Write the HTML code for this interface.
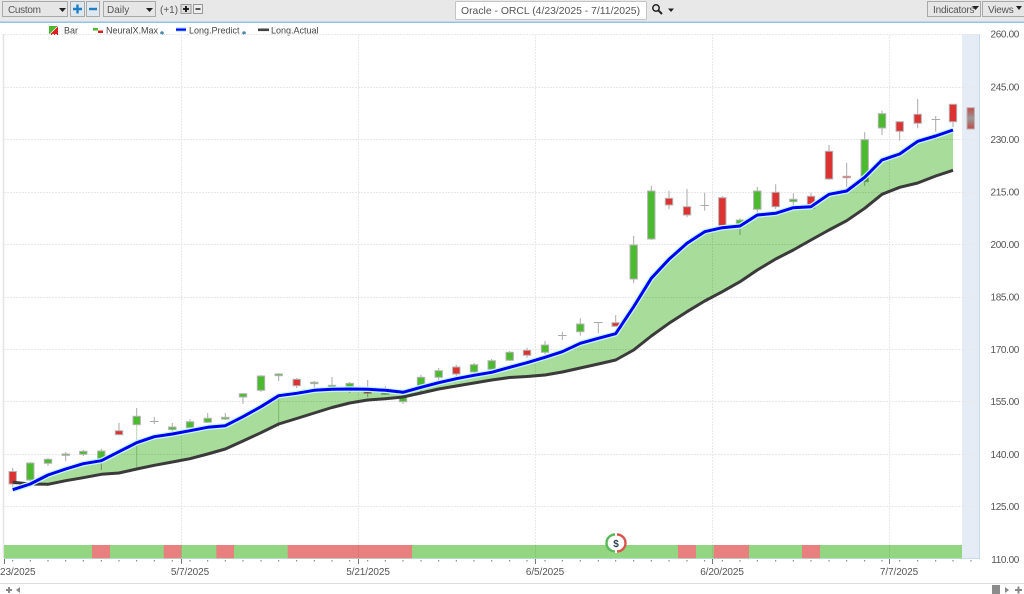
<!DOCTYPE html>
<html><head><meta charset="utf-8"><style>
html,body{margin:0;padding:0;background:#fff}
body{width:1024px;height:594px;overflow:hidden;position:relative;font-family:"Liberation Sans",sans-serif}
svg{position:absolute;left:0;top:0;display:block;filter:blur(.35px)}
text{font-family:"Liberation Sans",sans-serif}
.g{fill:#4cba2f;stroke:#b4b4b4;stroke-width:1}
.r{fill:#dc3232;stroke:#b4b4b4;stroke-width:1}
.ax{font-size:10px;fill:#555;text-anchor:end;letter-spacing:-.35px}
.dt{font-size:10px;fill:#555;text-anchor:middle;letter-spacing:-.1px}
.lg{font-size:9px;fill:#444}
.tb{font-size:10px;fill:#555}
.bx{fill:#e6e6e6;stroke:#a9a9a9;stroke-width:1}
</style></head><body>
<svg width="1024" height="594" viewBox="0 0 1024 594" xmlns="http://www.w3.org/2000/svg">
<rect x="0" y="0" width="1024" height="22" fill="#e8e8e8"/>
<rect x="0" y="21.5" width="1024" height="1.5" fill="#8fc6e8"/>
<rect x="2.5" y="1.5" width="65" height="15" class="bx"/>
<text x="8" y="13" class="tb" letter-spacing="-.3">Custom</text>
<path d="M59 8h7l-3.5 4z" fill="#222"/>
<rect x="70.5" y="1.500" width="14" height="15" fill="#dfe8ef" stroke="#a9a9a9"/>
<path d="M77.5 4.500v9M73 9h9" stroke="#1f7fc4" stroke-width="2.4"/>
<rect x="86.5" y="1.500" width="13" height="15" fill="#dfe8ef" stroke="#a9a9a9"/>
<path d="M89 9h8" stroke="#1f7fc4" stroke-width="2.4"/>
<rect x="103.5" y="1.500" width="52" height="15" class="bx"/>
<text x="107" y="13" class="tb">Daily</text>
<path d="M146 8h7l-3.5 4z" fill="#222"/>
<text x="160" y="13" class="tb">(+1)</text>
<rect x="181" y="4.500" width="10" height="9" fill="#ddd" stroke="#999"/>
<path d="M186 6v6M183 9h6" stroke="#111" stroke-width="1.8"/>
<rect x="193.5" y="4.500" width="9" height="9" fill="#eee" stroke="#999"/>
<path d="M195.5 9h5" stroke="#111" stroke-width="1.4"/>
<rect x="455.5" y="1.500" width="191" height="18" rx="1" fill="#fff" stroke="#c4c4c4"/>
<text x="461" y="14" font-size="10.4" fill="#555">Oracle - ORCL (4/23/2025 - 7/11/2025)</text>
<circle cx="656" cy="8" r="3.2" fill="none" stroke="#222" stroke-width="1.5"/>
<path d="M658.4 10.4l3.6 3.6" stroke="#222" stroke-width="2"/>
<path d="M668 8.500h6l-3 3.500z" fill="#222"/>
<rect x="927.5" y="1.500" width="53" height="15" class="bx"/>
<text x="933" y="13" class="tb" letter-spacing="-.2">Indicators</text>
<path d="M972 6h7l-3.500 4z" fill="#222"/>
<rect x="982.5" y="1.500" width="42" height="15" class="bx"/>
<text x="988" y="13" class="tb" letter-spacing="-.2">Views</text>
<path d="M1016 6h6l-3 4z" fill="#222"/>

<path d="M49 26h9v9h-9z" fill="#4cba2f"/><path d="M58 26v9h-9z" fill="#dc2020"/><path d="M49 35l9-9" stroke="#fff" stroke-width=".6"/>
<text x="64" y="33.500" class="lg">Bar</text>
<path d="M93 28h5v2.500h-5z" fill="#4cba2f"/><path d="M98 30.500h5V33h-5z" fill="#dc2020"/>
<text x="106" y="33.500" class="lg">NeuralX.Max</text>
<circle cx="162" cy="33" r="1.800" fill="#4a8aa8"/>
<rect x="176" y="27" width="10" height="5" fill="#bff0ff"/><rect x="176" y="28.500" width="10" height="2.200" fill="#0000ff"/>
<text x="189" y="33.500" class="lg">Long.Predict</text>
<circle cx="244" cy="33" r="1.800" fill="#4a8aa8"/>
<rect x="258" y="28.500" width="11" height="2.600" fill="#444"/>
<text x="271" y="33.500" class="lg">Long.Actual</text>

<rect x="962" y="34" width="17" height="524" fill="#e6ecf6"/>
<path d="M979.5 34V558.500H4" fill="none" stroke="#c4dcf0"/>
<path d="M3.500 34V558" stroke="#e4e4e4" stroke-width="1.500"/>
<path d="M4 34.500H979M4 87.500H979M4 139.500H979M4 192.500H979M4 244.500H979M4 297.500H979M4 349.500H979M4 401.500H979M4 454.500H979M4 506.500H979" stroke="#e8e8e8" stroke-dasharray="2 1"/>
<path d="M181.500 34V558M358.500 34V558M535.500 34V558M712.500 34V558M889.500 34V558" stroke="#e8e8e8" stroke-dasharray="2 1"/>

<path fill="none" stroke="#aaa" stroke-width="1" d="M12.700 468V488M30.300 462V482M48 458V466M65.700 452V461M83.300 450V456M101.300 449V470M119 423V435M136.700 408V425M154.300 417V424M172.300 423V434M190 419V428M207.700 413V423M225.300 413V420M243 393V404M261 375V392M278.700 373V381M296.700 378V388M314.300 381V389M332 377V392M349.700 382V393M367.700 380V397M385.300 386V395M403 393V404M421 375V393M438.700 368V380M456.300 365V378M474 363V378M491.700 359V373M509.700 351V361M527 347.700V357.700M545 341V354.300M562.300 331.700V340M580.300 318.300V335.700M598.300 322V333.300M615.700 315V326.700M633.700 235.700V283.300M651.300 186V240M669 190.700V209.300M687 189V217.300M704.700 192.700V210.700M722.300 196V228M740 218.300V235M757.300 186.700V213.300M775.700 184.300V209M793.300 193.300V206.700M811 192.700V209.300M829 145V180M846.700 162.700V186.700M864.700 132.300V185.700M882 110.700V135M899.700 121.700V140.700M917.700 99V128.300M935.700 116V131.700M953 104V127.300M150 421.500h8.600M558 335.500h8.600M594 322.500h8.600M700.500 205.500h8.600M931.500 119.500h8.600"/>
<path d="M136.700 425V468M278.700 397V427" stroke="#b8d8b0" stroke-width="1"/>
<rect class="r" x="9" y="471.500" width="7.400" height="12.500"/>
<rect class="g" x="26.600" y="463" width="7.400" height="17"/>
<rect class="g" x="44.300" y="459.300" width="7.400" height="4"/>
<rect class="g" x="62" y="454" width="7.400" height="1.400"/>
<rect class="g" x="79.600" y="451.300" width="7.400" height="3"/>
<rect class="g" x="97.600" y="451" width="7.400" height="8"/>
<rect class="r" x="115.300" y="430.700" width="7.400" height="4"/>
<rect class="g" x="133" y="416.300" width="7.400" height="8.400"/>
<rect class="g" x="168.600" y="427" width="7.400" height="2.600"/>
<rect class="g" x="186.300" y="421.700" width="7.400" height="6"/>
<rect class="g" x="204" y="418.300" width="7.400" height="4"/>
<rect class="g" x="221.600" y="417.300" width="7.400" height="1.800"/>
<rect class="g" x="239.300" y="393.700" width="7.400" height="3.300"/>
<rect class="g" x="257.300" y="376" width="7.400" height="14.300"/>
<rect class="g" x="275" y="374" width="7.400" height="1.700"/>
<rect class="r" x="293" y="379.300" width="7.400" height="6.400"/>
<rect class="g" x="310.600" y="382.300" width="7.400" height="1.400"/>
<rect class="g" x="328.300" y="385.300" width="7.400" height="4.700"/>
<rect class="g" x="346" y="383.300" width="7.400" height="5.400"/>
<rect class="r" x="364" y="389.300" width="7.400" height="4"/>
<rect class="g" x="381.600" y="393" width="7.400" height="1.300"/>
<rect class="g" x="399.300" y="397.700" width="7.400" height="4"/>
<rect class="g" x="417.300" y="377.300" width="7.400" height="9.400"/>
<rect class="g" x="435" y="370.700" width="7.400" height="6.600"/>
<rect class="r" x="452.600" y="367" width="7.400" height="7"/>
<rect class="g" x="470.300" y="364.700" width="7.400" height="7.300"/>
<rect class="g" x="488" y="360.700" width="7.400" height="8.600"/>
<rect class="g" x="506" y="352.300" width="7.400" height="8"/>
<rect class="r" x="523.300" y="350.300" width="7.400" height="5"/>
<rect class="g" x="541.300" y="345" width="7.400" height="7.300"/>
<rect class="g" x="576.600" y="324" width="7.400" height="7.700"/>
<rect class="r" x="612" y="322.700" width="7.400" height="3.600"/>
<rect class="g" x="630" y="245" width="7.400" height="34"/>
<rect class="g" x="647.600" y="191" width="7.400" height="48"/>
<rect class="r" x="665.300" y="198.300" width="7.400" height="6.700"/>
<rect class="r" x="683.300" y="206.700" width="7.400" height="8.300"/>
<rect class="r" x="718.600" y="197.700" width="7.400" height="28"/>
<rect class="g" x="736.300" y="220" width="7.400" height="6"/>
<rect class="g" x="753.600" y="191" width="7.400" height="18.300"/>
<rect class="r" x="772" y="192.300" width="7.400" height="14.400"/>
<rect class="g" x="789.600" y="199.300" width="7.400" height="2.400"/>
<rect class="r" x="807.300" y="196.300" width="7.400" height="12"/>
<rect class="r" x="825.300" y="151.300" width="7.400" height="27.700"/>
<rect x="843" y="176.300" width="7.400" height="1.400" fill="#c05a5a" stroke="#c9a0a0"/>
<rect class="g" x="861" y="139.700" width="7.400" height="42"/>
<rect class="g" x="878.300" y="113.700" width="7.400" height="14.300"/>
<rect class="r" x="896" y="121.700" width="7.400" height="9.600"/>
<rect class="r" x="914" y="114.300" width="7.400" height="9"/>
<rect class="r" x="949.300" y="104.300" width="7.400" height="17.400"/>
<defs><linearGradient id="gr" x1="0" y1="0" x2="0" y2="1"><stop offset="0" stop-color="#c04a4a"/><stop offset=".5" stop-color="#999"/><stop offset="1" stop-color="#c04a4a"/></linearGradient></defs>
<rect x="967" y="107.700" width="7.400" height="21.300" fill="url(#gr)" stroke="#c0b0b0"/>

<path fill="#a8dc9a" style="mix-blend-mode:multiply" d="M30.300 484 48 475 65.700 469 83.300 463.700 101.300 460.700 119 451.700 136.700 442.700 154.300 436.700 172.300 434 190 430.700 207.700 427.300 225.300 425.700 243 416.700 261 406.700 278.700 395.700 296.700 393.300 314.300 390.300 332 389.300 349.700 389 367.700 389.300 385.300 390.300 403 392.300 421 387.300 438.700 382.700 456.300 378.700 474 375.300 491.700 372.300 509.700 367.300 527 362.700 545 357.300 562.300 351.700 580.300 343.300 598.300 338.300 615.700 333.700 633.700 306.700 651.300 278.300 669 259.300 687 243.300 704.700 231.700 722.300 227.700 740 226 757.300 215 775.700 213.300 793.300 207.700 811 206.700 829 194.300 846.700 191 864.700 177.300 882 160 899.700 154 917.700 141.300 935.700 136 953 130V170.300L935.700 176 917.700 183 899.700 187.300 882 194.300 864.700 208.300 846.700 220.700 829 230 811 240 793.300 250 775.700 259 757.300 270 740 281.700 722.300 291.700 704.700 301 687 311.700 669 323.300 651.300 336 633.700 350 615.700 360 598.300 364 580.300 368 562.300 372 545 375 527 376.500 509.700 377.500 491.700 380 474 383 456.300 386 438.700 389 421 393 403 397 385.300 398.700 367.700 400 349.700 403 332 407.500 314.300 413 296.700 418.500 278.700 424 261 432.700 243 441 225.300 449 207.700 454 190 458.700 172.300 462 154.300 465.300 136.700 469 119 473 101.300 474.300 83.300 477.700 65.700 480.700 48 484.300Z"/>
<polyline fill="none" stroke="#3a3a3a" stroke-width="3" stroke-linejoin="round" points="12.700 482.300 30.300 484 48 484.300 65.700 480.700 83.300 477.700 101.300 474.300 119 473 136.700 469 154.300 465.300 172.300 462 190 458.700 207.700 454 225.300 449 243 441 261 432.700 278.700 424 296.700 418.500 314.300 413 332 407.500 349.700 403 367.700 400 385.300 398.700 403 397 421 393 438.700 389 456.300 386 474 383 491.700 380 509.700 377.500 527 376.500 545 375 562.300 372 580.300 368 598.300 364 615.700 360 633.700 350 651.300 336 669 323.300 687 311.700 704.700 301 722.300 291.700 740 281.700 757.300 270 775.700 259 793.300 250 811 240 829 230 846.700 220.700 864.700 208.300 882 194.300 899.700 187.300 917.700 183 935.700 176 953 170.300"/>
<g fill="none" stroke-linejoin="round">
<polyline stroke="#c4f8ff" stroke-width="5.500" points="12.700 489.700 30.300 484 48 475 65.700 469 83.300 463.700 101.300 460.700 119 451.700 136.700 442.700 154.300 436.700 172.300 434 190 430.700 207.700 427.300 225.300 425.700 243 416.700 261 406.700 278.700 395.700 296.700 393.300 314.300 390.300 332 389.300 349.700 389 367.700 389.300 385.300 390.300 403 392.300 421 387.300 438.700 382.700 456.300 378.700 474 375.300 491.700 372.300 509.700 367.300 527 362.700 545 357.300 562.300 351.700 580.300 343.300 598.300 338.300 615.700 333.700 633.700 306.700 651.300 278.300 669 259.300 687 243.300 704.700 231.700 722.300 227.700 740 226 757.300 215 775.700 213.300 793.300 207.700 811 206.700 829 194.300 846.700 191 864.700 177.300 882 160 899.700 154 917.700 141.300 935.700 136 953 130"/>
<polyline stroke="#0000f0" stroke-width="3" points="12.700 489.700 30.300 484 48 475 65.700 469 83.300 463.700 101.300 460.700 119 451.700 136.700 442.700 154.300 436.700 172.300 434 190 430.700 207.700 427.300 225.300 425.700 243 416.700 261 406.700 278.700 395.700 296.700 393.300 314.300 390.300 332 389.300 349.700 389 367.700 389.300 385.300 390.300 403 392.300 421 387.300 438.700 382.700 456.300 378.700 474 375.300 491.700 372.300 509.700 367.300 527 362.700 545 357.300 562.300 351.700 580.300 343.300 598.300 338.300 615.700 333.700 633.700 306.700 651.300 278.300 669 259.300 687 243.300 704.700 231.700 722.300 227.700 740 226 757.300 215 775.700 213.300 793.300 207.700 811 206.700 829 194.300 846.700 191 864.700 177.300 882 160 899.700 154 917.700 141.300 935.700 136 953 130"/>
</g>

<rect x="4" y="545" width="958" height="13.300" fill="#93d681"/>
<path d="M92 545h18v13.300H92zM163.700 545h17.600v13.300h-17.600zM216.300 545H234v13.300h-17.700zM287.700 545H412v13.300H287.700zM678 545h18v13.300h-18zM713.700 545H749v13.300h-35.300zM802 545h18v13.300h-18z" fill="#e88080"/>
<path d="M181.500 545V558M358.500 545V558M535.500 545V558M712.500 545V558M889.500 545V558" stroke="#000" stroke-opacity=".06"/>
<path stroke="#777" stroke-width="1" d="M12.700 560v1.500M30.300 560v1.500M48 560v1.500M65.700 560v1.500M83.300 560v1.500M101.300 560v1.500M119 560v1.500M136.700 560v1.500M154.300 560v1.500M172.300 560v1.500M190 560v1.500M207.700 560v1.500M225.300 560v1.500M243 560v1.500M261 560v1.500M278.700 560v1.500M296.700 560v1.500M314.300 560v1.500M332 560v1.500M349.700 560v1.500M367.700 560v1.500M385.300 560v1.500M403 560v1.500M421 560v1.500M438.700 560v1.500M456.300 560v1.500M474 560v1.500M491.700 560v1.500M509.700 560v1.500M527 560v1.500M545 560v1.500M562.300 560v1.500M580.300 560v1.500M598.300 560v1.500M615.700 560v1.500M633.700 560v1.500M651.300 560v1.500M669 560v1.500M687 560v1.500M704.700 560v1.500M722.300 560v1.500M740 560v1.500M757.300 560v1.500M775.700 560v1.500M793.300 560v1.500M811 560v1.500M829 560v1.500M846.700 560v1.500M864.700 560v1.500M882 560v1.500M899.700 560v1.500M917.700 560v1.500M935.700 560v1.500M953 560v1.500M971 560v1.500M4.500 559v5M181.500 559v5M358.500 559v5M535.500 559v5M712.500 559v5M889.500 559v5"/>

<circle cx="616" cy="543" r="10" fill="#fff"/>
<path d="M615 534.500a8.500 8.500 0 0 0 0 17" fill="none" stroke="#5cb85c" stroke-width="2.400"/>
<path d="M617 534.500a8.500 8.500 0 0 1 0 17" fill="none" stroke="#d9534f" stroke-width="2.400"/>
<text x="616" y="547" font-size="10" font-weight="bold" fill="#2c3e50" text-anchor="middle">$</text>

<text x="1019" y="37.500" class="ax">260.00</text>
<text x="1019" y="90.500" class="ax">245.00</text>
<text x="1019" y="143" class="ax">230.00</text>
<text x="1019" y="195.500" class="ax">215.00</text>
<text x="1019" y="248" class="ax">200.00</text>
<text x="1019" y="300.500" class="ax">185.00</text>
<text x="1019" y="353" class="ax">170.00</text>
<text x="1019" y="405" class="ax">155.00</text>
<text x="1019" y="458" class="ax">140.00</text>
<text x="1019" y="510" class="ax">125.00</text>
<text x="1019" y="563" class="ax">110.00</text>

<text x="0" y="575" class="dt" style="text-anchor:start">23/2025</text>
<text x="190" y="575" class="dt">5/7/2025</text>
<text x="368" y="575" class="dt">5/21/2025</text>
<text x="545" y="575" class="dt">6/5/2025</text>
<text x="722" y="575" class="dt">6/20/2025</text>
<text x="899" y="575" class="dt">7/7/2025</text>

<rect x="0" y="583" width="1024" height="1" fill="#dedede"/>
<path d="M6 590h6M9 587v6" stroke="#888" stroke-width="2"/>
<path d="M20 587v6l-4-3z" fill="#888"/>
<rect x="992" y="585" width="8" height="9" fill="#8c8c8c"/>
<path d="M1005 587v6l4-3z" fill="#888"/>
<path d="M1015 590h7M1018.500 586.500v7" stroke="#888" stroke-width="2"/>
</svg>
</body></html>
